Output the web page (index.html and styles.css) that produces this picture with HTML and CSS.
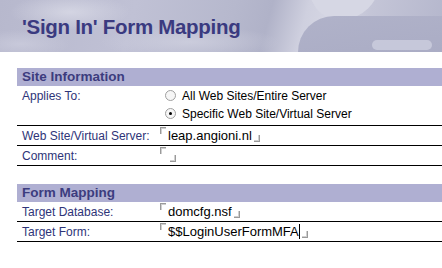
FILE: index.html
```html
<!DOCTYPE html>
<html>
<head>
<meta charset="utf-8">
<link rel="stylesheet" href="styles.css">
</head>
<body>
<div class="banner">
  <div class="shape shape-a"></div>
  <div class="shape shape-b"></div>
  <div class="shape shape-c"></div>
  <h1 class="title">'Sign In' Form Mapping</h1>
</div>
<div class="form">
  <div class="section-head">Site Information</div>
  <div class="row row-tall">
    <div class="label">Applies To:</div>
    <div class="radios">
      <div class="radio-line"><span class="radio"></span><span>All Web Sites/Entire Server</span></div>
      <div class="radio-line"><span class="radio checked"></span><span>Specific Web Site/Virtual Server</span></div>
    </div>
  </div>
  <div class="row">
    <div class="label">Web Site/Virtual Server:</div>
    <div class="value"><span class="mk-open"></span><span>leap.angioni.nl</span><span class="mk-close"></span></div>
  </div>
  <div class="row">
    <div class="label">Comment:</div>
    <div class="value"><span class="mk-open"></span><span class="mk-close"></span></div>
  </div>
  <div class="section-head section-gap">Form Mapping</div>
  <div class="row">
    <div class="label">Target Database:</div>
    <div class="value"><span class="mk-open"></span><span>domcfg.nsf</span><span class="mk-close"></span></div>
  </div>
  <div class="row">
    <div class="label">Target Form:</div>
    <div class="value"><span class="mk-open"></span><span>$$LoginUserFormMFA</span><span class="caret"></span><span class="mk-close"></span></div>
  </div>
</div>
</body>
</html>
```
FILE: styles.css
```css
html, body {
  margin: 0;
  padding: 0;
  background: #ffffff;
  font-family: "Liberation Sans", Arial, sans-serif;
}
.banner {
  position: relative;
  height: 52px;
  overflow: hidden;
  background:
    radial-gradient(ellipse 60px 18px at 70px 12px, rgba(222,223,234,0.7), transparent),
    radial-gradient(ellipse 90px 16px at 190px 42px, rgba(214,215,228,0.6), transparent),
    radial-gradient(ellipse 50px 14px at 20px 44px, rgba(210,211,226,0.6), transparent),
    linear-gradient(105deg, #b7b8cd 0%, #c0c1d5 30%, #b6b8cd 52%, #b0b2c8 60%, #cfd0df 68%, #d6d7e4 74%, #c4c5d7 82%, #b4b6cc 100%);
}
.shape {
  position: absolute;
}
.shape-a {
  left: 310px;
  top: -25px;
  width: 70px;
  height: 45px;
  border-radius: 0 0 40px 30px;
  background: #d6d7e4;
}
.shape-b {
  left: 298px;
  top: 16px;
  width: 170px;
  height: 60px;
  border-radius: 36px 0 0 0;
  background: linear-gradient(172deg, #b0b2c9, #a8aac3);
}
.shape-c {
  left: 372px;
  top: 40px;
  width: 60px;
  height: 10px;
  border-radius: 6px;
  background: rgba(205,206,222,0.8);
}
.title {
  position: relative;
  margin: 0;
  padding: 14px 0 0 22px;
  font-size: 20.5px;
  letter-spacing: -0.3px;
  font-weight: bold;
  color: #3a3a80;
  line-height: 26px;
}
.form {
  margin: 16px 0 0 17px;
  font-size: 12px;
}
.section-head {
  height: 18px;
  line-height: 18px;
  background: #afafd2;
  color: #3c3c7e;
  font-weight: bold;
  padding-left: 5px;
  font-size: 13.5px;
}
.section-gap {
  margin-top: 18px;
}
.row {
  display: flex;
  border-bottom: 1px solid #000000;
  height: 19px;
  align-items: center;
}
.row-tall {
  height: 39px;
  align-items: flex-start;
}
.row-tall .label {
  padding-top: 3px;
}
.label {
  width: 138px;
  padding-left: 5px;
  color: #2e3478;
  flex: none;
  white-space: nowrap;
}
.radios {
  display: flex;
  flex-direction: column;
  padding-left: 5px;
  color: #000;
}
.radio-line {
  display: flex;
  align-items: center;
  height: 17px;
  margin-top: 1px;
}
.radio {
  width: 9px;
  height: 9px;
  border-radius: 50%;
  border: 1px solid #a0a0a0;
  background: #f6f6f6;
  margin-right: 6px;
  position: relative;
}
.radio.checked::after {
  content: "";
  position: absolute;
  left: 3px;
  top: 3px;
  width: 3px;
  height: 3px;
  border-radius: 50%;
  background: #000;
}
.value {
  display: flex;
  align-items: center;
  color: #000;
  height: 19px;
  font-size: 13px;
}
.mk-open {
  width: 5px;
  height: 6px;
  border-left: 1px solid #9a9a9a;
  border-top: 1px solid #9a9a9a;
  box-shadow: inset 1px 1px 0 #d0d0d0;
  align-self: flex-start;
  margin-top: 1px;
  margin-right: 2px;
}
.mk-close {
  width: 5px;
  height: 6px;
  border-right: 1px solid #9a9a9a;
  border-bottom: 1px solid #9a9a9a;
  box-shadow: inset -1px -1px 0 #d0d0d0;
  align-self: flex-end;
  margin-bottom: 3px;
  margin-left: 2px;
}
.caret {
  width: 1px;
  height: 15px;
  background: #000;
}
```
